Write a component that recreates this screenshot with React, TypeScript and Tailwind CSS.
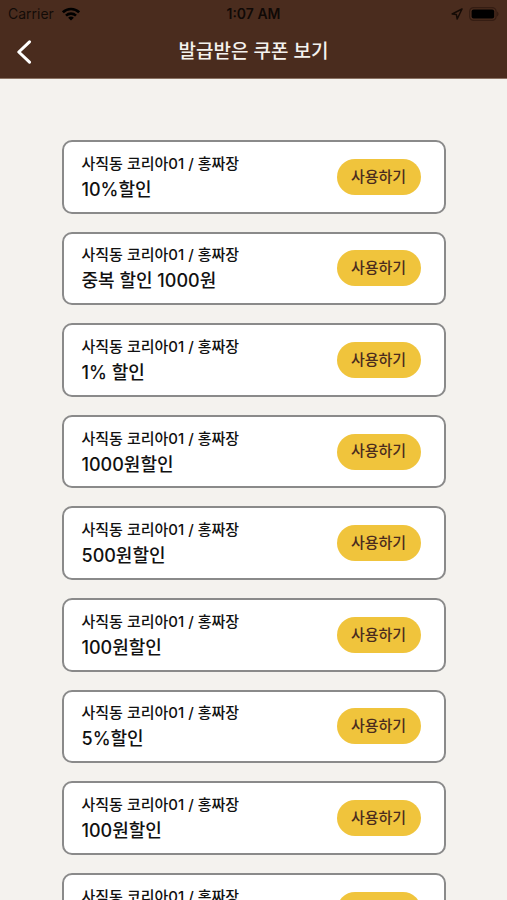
const coupons = [
  '10%할인',
  '중복 할인 1000원',
  '1% 할인',
  '1000원할인',
  '500원할인',
  '100원할인',
  '5%할인',
  '100원할인',
  '100원할인',
];

function StatusBar() {
  return (
    <div className="grid h-7 grid-cols-3 items-center px-2 text-sm text-black/80">
      <div className="flex items-center gap-2 text-black/75">
        <span>Carrier</span>
        <svg className="h-[14px] w-[18px]" viewBox="0 0 18 14" fill="none" stroke="#000" strokeWidth="2.6" aria-hidden="true">
          <path d="M0.9 5.3C5.4 0.9 12.6 0.9 17.1 5.3" />
          <path d="M4 8.6C6.8 5.9 11.2 5.9 14 8.6" />
          <path d="M9 13.6L6.1 10.7C7.7 9.2 10.3 9.2 11.9 10.7Z" fill="#000" stroke="none" />
        </svg>
      </div>
      <span className="text-center font-semibold">1:07 AM</span>
      <div className="flex items-center justify-end gap-1.5">
        <svg className="h-3 w-3" viewBox="0 0 12 12" fill="none" stroke="#150b06" strokeWidth="1.5" strokeLinejoin="round" aria-hidden="true">
          <path d="M11 1L1.2 6L5.4 6.6L6.2 11Z" />
        </svg>
        <svg className="h-[14px] w-[30px]" viewBox="0 0 30 14" aria-hidden="true">
          <rect x="0.6" y="0.6" width="26.5" height="12.8" rx="4" fill="none" stroke="#351d13" strokeWidth="1.2" />
          <rect x="2.6" y="2.5" width="22.6" height="9" rx="2" fill="#000" />
          <path d="M28 4.6C30 5.4 30 8.6 28 9.4Z" fill="#351d13" />
        </svg>
      </div>
    </div>
  );
}

function CouponCard({ title }: { title: string }) {
  return (
    <li className="flex aspect-[120/23] items-center justify-between rounded-[10px] border-2 border-[#8a8a8a] bg-white pr-[23px] pl-[18px]">
      <div className="font-medium text-[#111]">
        <p className="text-[15px] leading-[26px]">사직동 코리아01 / 홍짜장</p>
        <p className="text-[18px] leading-[26px]">{title}</p>
      </div>
      <button type="button" className="h-9 w-[84px] rounded-full bg-[#f0c43c] text-[15px] font-medium text-[#4b2c1e]">
        사용하기
      </button>
    </li>
  );
}

export default function App() {
  return (
    <div className="flex h-screen flex-col bg-[#f4f2ee] font-['Inter','Noto_Sans_CJK_KR',sans-serif]">
      <header className="bg-[#4a2c1e]">
        <StatusBar />
        <div className="grid h-[51px] grid-cols-[48px_1fr_48px] items-center border-b border-[#8a7263] pb-0.5">
          <button type="button" aria-label="뒤로" className="flex h-10 items-center pl-4">
            <svg className="h-6 w-4" viewBox="0 0 16 24" fill="none" stroke="#fff" strokeWidth="3" strokeLinecap="round" strokeLinejoin="round" aria-hidden="true">
              <path d="M13.5 1.8L2.8 12L13.5 22.2" />
            </svg>
          </button>
          <h1 className="text-center text-[19px] font-medium text-[#f4f2ee]">발급받은 쿠폰 보기</h1>
        </div>
      </header>
      <main className="min-h-0 flex-1 overflow-y-auto px-6 pt-[61px] [scrollbar-width:none]">
        <ul className="mx-auto flex max-w-96 flex-col gap-[18px] pb-10">
          {coupons.map((title, i) => (
            <CouponCard key={i} title={title} />
          ))}
        </ul>
      </main>
    </div>
  );
}
